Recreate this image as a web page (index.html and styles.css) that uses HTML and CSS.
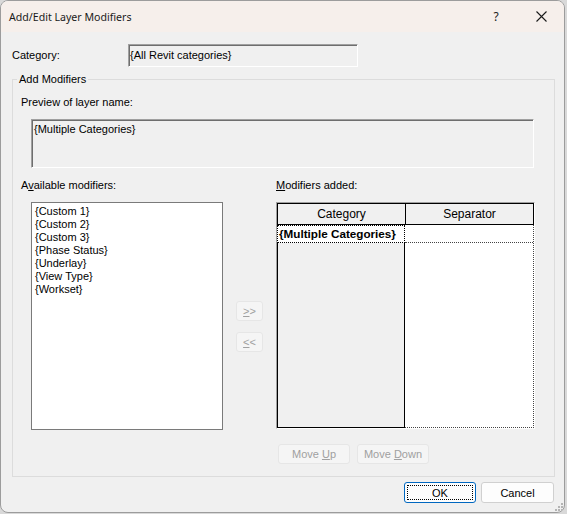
FILE: index.html
```html
<!DOCTYPE html>
<html>
<head>
<meta charset="utf-8">
<link rel="stylesheet" href="styles.css">
</head>
<body>
<div class="window">
  <div class="titlebar">
    <span class="title">Add/Edit Layer Modifiers</span>
    <span class="tbtn help">?</span>
    <span class="tbtn close"><svg width="11" height="11" viewBox="0 0 11 11"><path d="M0.5 0.5 L10.5 10.5 M10.5 0.5 L0.5 10.5" stroke="#1a1a1a" stroke-width="1.1" fill="none"/></svg></span>
  </div>
  <div class="content">
    <div class="cat-row">
      <span class="cat-label">Category:</span>
      <div class="field">{All Revit categories}</div>
    </div>
    <fieldset class="group">
      <legend>Add Modifiers</legend>
      <div class="lbl">Preview of layer name:</div>
      <div class="preview">{Multiple Categories}</div>
      <div class="cols">
        <div class="lbl">A<u>v</u>ailable modifiers:</div>
        <div></div>
        <div class="lbl"><u>M</u>odifiers added:</div>
        <ul class="listbox">
          <li>{Custom 1}</li>
          <li>{Custom 2}</li>
          <li>{Custom 3}</li>
          <li>{Phase Status}</li>
          <li>{Underlay}</li>
          <li>{View Type}</li>
          <li>{Workset}</li>
        </ul>
        <div class="arrows">
          <button class="btn dis arrow"><u>&gt;</u>&gt;</button>
          <button class="btn dis arrow"><u>&lt;</u>&lt;</button>
        </div>
        <div class="table">
          <div class="thead">
            <div class="th th1">Category</div>
            <div class="th th2">Separator</div>
          </div>
          <div class="tbody">
            <div class="c1">
              <div class="sel">{Multiple Categories}</div>
            </div>
            <div class="c2">
              <div class="row1"></div>
            </div>
          </div>
        </div>
        <div></div>
        <div></div>
        <div class="move">
          <button class="btn dis mv">Move <u>U</u>p</button>
          <button class="btn dis mv">Move <u>D</u>own</button>
        </div>
      </div>
    </fieldset>
    <div class="footer">
      <button class="btn dlg ok"><span class="focus">OK</span></button>
      <button class="btn dlg">Cancel</button>
    </div>
  </div>
  <svg class="grip" width="8" height="8" viewBox="0 0 8 8">
    <rect x="6" y="0" width="2" height="2" fill="#b4b4b4"/>
    <rect x="3" y="3" width="2" height="2" fill="#b4b4b4"/>
    <rect x="6" y="3" width="2" height="2" fill="#b4b4b4"/>
    <rect x="0" y="6" width="2" height="2" fill="#b4b4b4"/>
    <rect x="3" y="6" width="2" height="2" fill="#b4b4b4"/>
    <rect x="6" y="6" width="2" height="2" fill="#b4b4b4"/>
  </svg>
</div>
</body>
</html>
```
FILE: styles.css
```css
html, body {
  margin: 0;
  padding: 0;
}
body {
  background: #d9d9d9;
  font-family: "Liberation Sans", Arial, sans-serif;
  font-size: 11px;
  color: #000;
}
.window {
  width: 565px;
  height: 513px;
  box-sizing: border-box;
  border: 1px solid #9c9c9c;
  border-radius: 8px;
  background: #f0f0f0;
  overflow: hidden;
  position: relative;
  display: flex;
  flex-direction: column;
}
.titlebar {
  height: 31px;
  flex: none;
  background: #f6efeb;
  display: flex;
  align-items: center;
  padding-left: 8px;
  font-family: "Noto Sans", "Segoe UI", sans-serif;
  font-size: 10.6px;
  color: #1a1a1a;
}
.title {
  flex: 1;
}
.tbtn {
  display: flex;
  align-items: center;
  justify-content: center;
  height: 31px;
}
.help {
  width: 44px;
  font-size: 12px;
}
.close {
  width: 46px;
}
.content {
  padding: 0 10px 0 11px;
  flex: 1;
  display: flex;
  flex-direction: column;
}
.cat-row {
  margin-top: 12px;
  height: 23px;
  display: flex;
  align-items: center;
}
.cat-label {
  width: 116px;
  line-height: 13px;
}
.field {
  width: 230px;
  height: 23px;
  box-sizing: border-box;
  border-top: 1px solid #a0a0a0;
  border-left: 1px solid #a0a0a0;
  border-right: 1px solid #ffffff;
  border-bottom: 1px solid #ffffff;
  box-shadow: inset 1px 1px 0 #6e6e6e;
  display: flex;
  align-items: center;
  padding-left: 1px;
  line-height: 13px;
}
.group {
  margin: 6px 0 0 0;
  width: 543px;
  box-sizing: border-box;
  border: 1px solid #dcdcdc;
  padding: 0 0 12px 8px;
  min-inline-size: 0;
}
.group legend {
  margin-left: -4px;
  padding: 0 2px;
  line-height: 13px;
}
.lbl {
  line-height: 13px;
}
.group > .lbl {
  margin-top: 10px;
}
.preview {
  margin: 10px 0 0 10px;
  width: 503px;
  height: 49px;
  box-sizing: border-box;
  border-top: 1px solid #a0a0a0;
  border-left: 1px solid #a0a0a0;
  border-right: 1px solid #ffffff;
  border-bottom: 1px solid #ffffff;
  box-shadow: inset 1px 1px 0 #6e6e6e;
  padding: 3px 0 0 2px;
  line-height: 13px;
}
.cols {
  margin-top: 11px;
  display: grid;
  grid-template-columns: 202px 27px 259px;
  column-gap: 13px;
  row-gap: 10px;
}
.listbox {
  list-style: none;
  margin: 0 0 0 10px;
  width: 192px;
  height: 228px;
  box-sizing: border-box;
  border: 1px solid #7a7a7a;
  background: #fff;
  padding: 2px 0 0 3px;
}
.listbox li {
  line-height: 13px;
}
.arrows {
  display: flex;
  flex-direction: column;
  gap: 11px;
  padding-top: 99px;
}
.btn {
  font-family: "Liberation Sans", Arial, sans-serif;
  font-size: 11px;
  box-sizing: border-box;
  border-radius: 3px;
  padding: 0;
  margin: 0;
}
.dis {
  background: #f5f5f5;
  border: 1px solid #e6e6e6;
  color: #a0a0a0;
}
.arrow {
  width: 27px;
  height: 20px;
}
.table {
  width: 259px;
  height: 227px;
  box-sizing: border-box;
  border-top: 1px solid #a0a0a0;
  border-left: 1px solid #a0a0a0;
  border-right: 1px solid #ffffff;
  border-bottom: 1px solid #ffffff;
  display: flex;
  flex-direction: column;
}
.thead {
  height: 22px;
  box-sizing: border-box;
  border: 1px solid #000;
  display: flex;
  background: #f0f0f0;
}
.th {
  display: flex;
  align-items: center;
  justify-content: center;
  line-height: 13px;
  font-size: 12px;
}
.th1 {
  width: 127px;
  border-right: 1px solid #000;
}
.th2 {
  flex: 1;
}
.tbody {
  flex: 1;
  display: flex;
}
.c1 {
  width: 128px;
  box-sizing: border-box;
  border-left: 1px solid #000;
  border-right: 1px solid #000;
  border-bottom: 1px solid #000;
  background: #f0f0f0;
}
.sel {
  height: 18px;
  margin-left: -1px;
  margin-right: -1px;
  box-sizing: border-box;
  border: 1px dotted #000;
  background: #fff;
  font-weight: bold;
  line-height: 15px;
  padding-left: 1px;
  font-size: 11.7px;
  white-space: nowrap;
}
.c2 {
  flex: 1;
  background: #fff;
  box-sizing: border-box;
  border-right: 1px dotted #444;
  border-bottom: 1px dotted #444;
}
.row1 {
  height: 18px;
  box-sizing: border-box;
  border-bottom: 1px dotted #444;
}
.move {
  display: flex;
  gap: 7px;
  margin-left: 2px;
  margin-top: 4px;
}
.mv {
  width: 72px;
  height: 20px;
}
.footer {
  display: flex;
  justify-content: flex-end;
  gap: 5px;
  margin-top: 5px;
}
.dlg {
  height: 21px;
  background: #fdfdfd;
  border: 1px solid #d0d0d0;
  color: #000;
  width: 73px;
}
.ok {
  width: 72px;
  border-color: #0067c0;
  padding: 2px;
}
.focus {
  display: flex;
  align-items: center;
  justify-content: center;
  height: 100%;
  box-sizing: border-box;
  border: 1px dotted #000;
}
.grip {
  position: absolute;
  right: 1px;
  bottom: 1px;
}
```
